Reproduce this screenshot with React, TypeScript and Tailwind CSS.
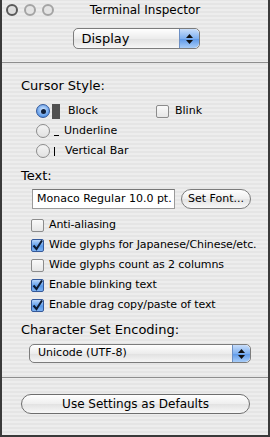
import React from 'react';

const font = { fontFamily: '"DejaVu Sans", "Liberation Sans", sans-serif' };

function Stepper({ small }: { small?: boolean }) {
  return (
    <div
      className={`flex flex-col items-center justify-center gap-[2px] h-full rounded-r-[5px] border-l border-[#6c8fc4] bg-[linear-gradient(#c9defa,#7fb0f0_50%,#5b97e8_51%,#a9cdf8)] ${
        small ? 'w-[18px]' : 'w-[20px]'
      }`}
    >
      <svg width="7" height="4" viewBox="0 0 7 4">
        <path d="M0 4 L3.5 0 L7 4 Z" fill="#111" />
      </svg>
      <svg width="7" height="4" viewBox="0 0 7 4">
        <path d="M0 0 L3.5 4 L7 0 Z" fill="#111" />
      </svg>
    </div>
  );
}

function Radio({ on }: { on?: boolean }) {
  return on ? (
    <span className="w-[14px] h-[14px] rounded-full border border-[#34599a] bg-[radial-gradient(circle_at_50%_40%,#d6e8ff,#5d9ae8_70%,#3470cf)] flex items-center justify-center">
      <span className="w-[5px] h-[5px] rounded-full bg-[#10203a]" />
    </span>
  ) : (
    <span className="w-[14px] h-[14px] rounded-full border border-[#8c8c8c] bg-[linear-gradient(#f4f4f4,#e2e2e2)]" />
  );
}

function Check({ on }: { on?: boolean }) {
  return on ? (
    <span className="w-[13px] h-[13px] rounded-[2px] border border-[#34599a] bg-[linear-gradient(#b8d6fb,#5a9ae9_55%,#7fb3f2)] flex items-center justify-center">
      <svg width="11" height="11" viewBox="0 0 11 11">
        <path d="M1.5 5.5 L4.5 9 L10 0.5" fill="none" stroke="#0d1a30" strokeWidth="2" />
      </svg>
    </span>
  ) : (
    <span className="w-[13px] h-[13px] rounded-[2px] border border-[#8c8c8c] bg-[linear-gradient(#fafafa,#e6e6e6)]" />
  );
}

const checks = [
  { label: 'Anti-aliasing', on: false },
  { label: 'Wide glyphs for Japanese/Chinese/etc.', on: true },
  { label: 'Wide glyphs count as 2 columns', on: false },
  { label: 'Enable blinking text', on: true },
  { label: 'Enable drag copy/paste of text', on: true },
];

export default function App() {
  return (
    <div
      style={font}
      className="w-[270px] h-[437px] border-x-2 border-b-2 border-[#3a3a3a] bg-[repeating-linear-gradient(0deg,#ededed_0px,#ededed_2px,#e5e5e5_2px,#e5e5e5_4px)] text-black flex flex-col overflow-hidden"
    >
      {/* title bar */}
      <div className="h-[19px] flex items-center relative">
        <div className="flex gap-[6px] pl-[4px]">
          <span className="w-[12px] h-[12px] rounded-full border-2 border-[#5a5a5a] bg-[#ddd]" />
          <span className="w-[12px] h-[12px] rounded-full border-2 border-[#a4a4a4] bg-[#e4e4e4]" />
          <span className="w-[12px] h-[12px] rounded-full border-2 border-[#a4a4a4] bg-[#e4e4e4]" />
        </div>
        <div className="absolute inset-0 flex items-center justify-center text-[12px] pl-[20px]">
          Terminal Inspector
        </div>
      </div>

      {/* panel popup */}
      <div className="h-[43px] flex items-start justify-center pt-[9px]">
        <div className="w-[127px] h-[21px] ml-[2px] rounded-[5px] border border-[#7c7c7c] bg-[linear-gradient(#ffffff,#ececec_50%,#e0e0e0_51%,#f6f6f6)] flex items-center overflow-hidden">
          <span className="flex-1 pl-[8px] text-[13px]">Display</span>
          <Stepper />
        </div>
      </div>
      <div className="h-[1px] bg-[#8e8e8e]" />

      {/* cursor style */}
      <div className="pl-[19px] pt-[15px]">
        <div className="text-[13px] leading-[16px]">Cursor Style:</div>
        <div className="pl-[15px] pt-[7px] text-[11px]">
          <div className="h-[20px] flex items-center">
            <Radio on />
            <span className="ml-[2px] w-[8px] h-[15px] bg-[#505050]" />
            <span className="ml-[8px] w-[88px]">Block</span>
            <Check />
            <span className="ml-[6px]">Blink</span>
          </div>
          <div className="h-[20px] flex items-center">
            <Radio />
            <span className="ml-[4px] w-[5px] h-[1px] mt-[8px] bg-black" />
            <span className="ml-[5px]">Underline</span>
          </div>
          <div className="h-[20px] flex items-center">
            <Radio />
            <span className="ml-[4px] w-[1px] h-[9px] bg-black" />
            <span className="ml-[10px]">Vertical Bar</span>
          </div>
        </div>

        {/* text */}
        <div className="text-[13px] leading-[16px] pt-[7px]">Text:</div>
        <div className="pl-[11px] pt-[5px] flex items-center gap-[6px]">
          <div className="w-[143px] h-[20px] bg-white border border-[#9a9a9a] border-t-[#777] flex items-center pl-[4px] text-[11px]">
            Monaco Regular 10.0 pt.
          </div>
          <div className="w-[70px] h-[20px] rounded-full border border-[#7c7c7c] bg-[linear-gradient(#ffffff,#eeeeee_50%,#e2e2e2_51%,#f8f8f8)] flex items-center justify-center text-[11px]">
            Set Font...
          </div>
        </div>
        <div className="pl-[10px] pt-[6px] text-[11px] tracking-[-0.1px]">
          {checks.map((c) => (
            <div key={c.label} className="h-[20px] flex items-center">
              <Check on={c.on} />
              <span className="ml-[5px] whitespace-nowrap">{c.label}</span>
            </div>
          ))}
        </div>

        {/* encoding */}
        <div className="text-[13px] leading-[16px] pt-[7px]">Character Set Encoding:</div>
        <div className="pl-[8px] pt-[6px]">
          <div className="w-[222px] h-[19px] rounded-[5px] border border-[#7c7c7c] bg-[linear-gradient(#ffffff,#ececec_50%,#e0e0e0_51%,#f6f6f6)] flex items-center overflow-hidden">
            <span className="flex-1 pl-[8px] text-[11px]">Unicode (UTF-8)</span>
            <Stepper small />
          </div>
        </div>
      </div>

      <div className="mt-[14px] h-[1px] bg-[#8e8e8e]" />

      {/* bottom button */}
      <div className="pl-[19px] pt-[16px]">
        <div className="w-[229px] h-[20px] rounded-full border border-[#6e6e6e] bg-[linear-gradient(#ffffff,#eeeeee_50%,#e2e2e2_51%,#f8f8f8)] flex items-center justify-center text-[12px]">
          Use Settings as Defaults
        </div>
      </div>
    </div>
  );
}
